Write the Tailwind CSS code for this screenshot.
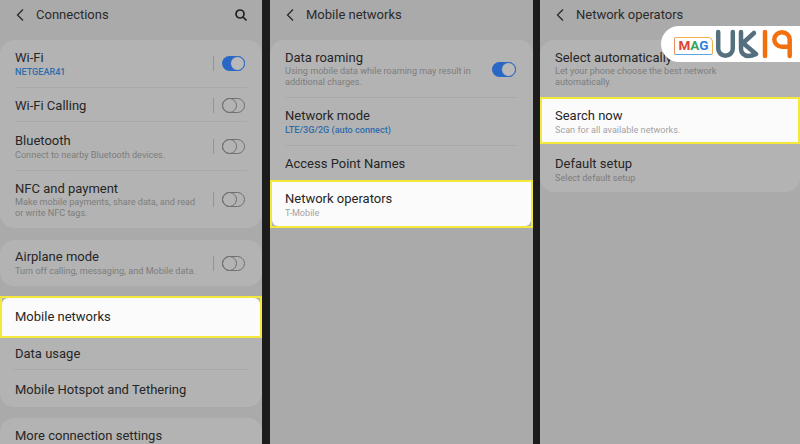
<!DOCTYPE html>
<html><head><meta charset="utf-8"><script src="https://cdn.jsdelivr.net/npm/@tailwindcss/browser@4"></script></head>
<body class="m-0">
<div class="relative w-[800px] h-[444px] overflow-hidden bg-[#1c1c1c] flex font-['Roboto',sans-serif] text-[#262626] text-[13px] leading-[16px]">

<!-- Panel 1 -->
<div class="w-[262px] h-full bg-[#aaaaaa] shrink-0 overflow-hidden">
  <div class="h-[40px] pl-[15px] pr-[14px] pb-[11px] flex items-center">
    <svg class="w-[10px] h-[14px] mr-[11px]" viewBox="0 0 10 14" fill="none" stroke="#2a2a2a" stroke-width="1.3"><path d="M8 1.500 2.500 7 8 12.500"/></svg>
    <span class="text-[#2a2a2a]">Connections</span>
    <svg class="ml-auto w-[14px] h-[14px]" viewBox="0 0 14 14" fill="none" stroke="#222" stroke-width="1.7"><circle cx="6" cy="6" r="4"/><path d="m9 9 3.500 3.500"/></svg>
  </div>
  <div class="bg-[#b3b3b3] rounded-[14px] h-[188px] flex flex-col px-[15px]">
    <div class="h-[48px] flex items-center border-b border-[#a9a9a9]">
      <div class="flex-1"><div>Wi-Fi</div><div class="text-[9.1px] leading-[12px] text-[#2f6cab] font-medium">NETGEAR41</div></div>
      <div class="w-px h-[15px] bg-[#949494] mr-[8px]"></div>
      <div class="relative w-[23px] h-[15px] mr-[2px] rounded-full bg-[#2a66c4]"><div class="absolute right-0 top-0 w-[15px] h-[15px] rounded-full bg-[#b9b9b9] border border-[#2a66c4]"></div></div>
    </div>
    <div class="h-[34px] pt-[2px] flex items-center border-b border-[#a9a9a9]">
      <div class="flex-1">Wi-Fi Calling</div>
      <div class="w-px h-[15px] bg-[#949494] mr-[8px]"></div>
      <div class="relative w-[23px] h-[15px] mr-[2px] rounded-full border border-[#707070]"><div class="absolute left-[-1px] top-[-1px] w-[15px] h-[15px] rounded-full border border-[#707070]"></div></div>
    </div>
    <div class="h-[49px] flex items-center border-b border-[#a9a9a9]">
      <div class="flex-1 pt-[2px]"><div>Bluetooth</div><div class="text-[9.1px] leading-[12px] text-[#7d7d7d]">Connect to nearby Bluetooth devices.</div></div>
      <div class="w-px h-[15px] bg-[#949494] mr-[8px]"></div>
      <div class="relative w-[23px] h-[15px] mr-[2px] rounded-full border border-[#707070]"><div class="absolute left-[-1px] top-[-1px] w-[15px] h-[15px] rounded-full border border-[#707070]"></div></div>
    </div>
    <div class="h-[57px] flex items-center">
      <div class="flex-1 pt-[1px]"><div>NFC and payment</div><div class="text-[9.1px] leading-[11px] text-[#7d7d7d]">Make mobile payments, share data, and read<br>or write NFC tags.</div></div>
      <div class="w-px h-[15px] bg-[#949494] mr-[8px]"></div>
      <div class="relative w-[23px] h-[15px] mr-[2px] rounded-full border border-[#707070]"><div class="absolute left-[-1px] top-[-1px] w-[15px] h-[15px] rounded-full border border-[#707070]"></div></div>
    </div>
  </div>
  <div class="bg-[#b3b3b3] rounded-[14px] h-[46px] mt-[12px] flex items-center px-[15px]">
    <div class="flex-1"><div>Airplane mode</div><div class="text-[9.1px] leading-[12px] text-[#7d7d7d]">Turn off calling, messaging, and Mobile data.</div></div>
    <div class="w-px h-[15px] bg-[#949494] mr-[8px]"></div>
    <div class="relative w-[23px] h-[15px] mr-[2px] rounded-full border border-[#707070]"><div class="absolute left-[-1px] top-[-1px] w-[15px] h-[15px] rounded-full border border-[#707070]"></div></div>
  </div>
  <div class="mt-[10px] bg-[#b3b3b3] rounded-[14px] h-[111px]">
    <div class="h-[42px] bg-[#b3b3b3] border-2 border-[#f4e83c]"><div class="h-full bg-[#fcfbfc] rounded-t-[6px] pl-[13px] flex items-center">Mobile networks</div></div>
    <div class="mx-[13px] pl-[2px] h-[32px] flex items-center border-b border-[#a9a9a9]">Data usage</div>
    <div class="px-[15px] h-[37px] pt-[2px] flex items-center">Mobile Hotspot and Tethering</div>
  </div>
  <div class="mt-[11px] bg-[#b3b3b3] rounded-t-[14px] h-[40px] px-[15px] pt-[10px]">More connection settings</div>
</div>

<div class="w-[8px] shrink-0"></div>

<!-- Panel 2 -->
<div class="w-[263px] h-full bg-[#aaaaaa] shrink-0 overflow-hidden">
  <div class="h-[40px] pl-[15px] pb-[11px] flex items-center">
    <svg class="w-[10px] h-[14px] mr-[11px]" viewBox="0 0 10 14" fill="none" stroke="#2a2a2a" stroke-width="1.3"><path d="M8 1.500 2.500 7 8 12.500"/></svg>
    <span class="text-[#2a2a2a]">Mobile networks</span>
  </div>
  <div class="bg-[#b3b3b3] rounded-[14px] h-[188px]">
    <div class="mx-[15px] h-[58px] pt-[1px] flex items-center border-b border-[#a9a9a9]">
      <div class="flex-1"><div>Data roaming</div><div class="text-[9.1px] leading-[11px] text-[#7d7d7d]">Using mobile data while roaming may result in<br>additional charges.</div></div>
      <div class="relative w-[24px] h-[15px] mr-[2px] rounded-full bg-[#2a66c4]"><div class="absolute right-0 top-0 w-[15px] h-[15px] rounded-full bg-[#b9b9b9] border border-[#2a66c4]"></div></div>
    </div>
    <div class="mx-[15px] h-[48px] pt-[1px] flex flex-col justify-center border-b border-[#a9a9a9]">
      <div>Network mode</div><div class="text-[9.1px] leading-[12px] text-[#2f6cab] font-medium">LTE/3G/2G (auto connect)</div>
    </div>
    <div class="px-[15px] h-[34px] pt-[2px] flex items-center">Access Point Names</div>
    <div class="h-[48px] bg-[#b3b3b3] border-2 border-[#f4e83c]"><div class="h-full pt-[1px] bg-[#fcfbfc] rounded-b-[6px] pl-[13px] flex flex-col justify-center">
      <div>Network operators</div><div class="text-[9.1px] leading-[12px] text-[#a3a3a3]">T-Mobile</div>
    </div></div>
  </div>
</div>

<div class="w-[7px] shrink-0"></div>

<!-- Panel 3 -->
<div class="flex-1 h-full bg-[#aaaaaa] overflow-hidden">
  <div class="h-[40px] pl-[15px] pb-[11px] flex items-center">
    <svg class="w-[10px] h-[14px] mr-[11px]" viewBox="0 0 10 14" fill="none" stroke="#2a2a2a" stroke-width="1.3"><path d="M8 1.500 2.500 7 8 12.500"/></svg>
    <span class="text-[#2a2a2a]">Network operators</span>
  </div>
  <div class="bg-[#b3b3b3] rounded-[14px] h-[152px]">
    <div class="px-[15px] h-[57px] pt-[1px] flex flex-col justify-center">
      <div>Select automatically</div><div class="text-[9.1px] leading-[11px] text-[#7d7d7d]">Let your phone choose the best network<br>automatically.</div>
    </div>
    <div class="h-[47px] bg-[#fcfbfc] border-2 border-[#f4e83c] pt-[3px] pl-[13px] flex flex-col justify-center">
      <div>Search now</div><div class="text-[9.1px] leading-[12px] text-[#a3a3a3]">Scan for all available networks.</div>
    </div>
    <div class="px-[15px] h-[48px] pt-[3px] flex flex-col justify-center">
      <div>Default setup</div><div class="text-[9.1px] leading-[12px] text-[#7d7d7d]">Select default setup</div>
    </div>
  </div>
</div>

<!-- Logo badge -->
<div class="absolute right-0 top-[26px] w-[139px] h-[36px] bg-white rounded-l-[18px] flex items-center pl-[13px]">
  <div class="w-[39px] h-[18px] shrink-0 rounded-tr-[5px] rounded-[2px] border border-[#f2b04a] border-b-[#5aa7e0] border-l-[#e89060] mt-[4px] flex items-center justify-center text-[13.5px] font-bold leading-none">
    <span class="text-[#e04338]">M</span><span class="text-[#3aa655]">A</span><span class="text-[#2f7fe0]">G</span>
  </div>
  <svg class="shrink-0 w-[87px] h-[36px]" viewBox="0 0 87 36" fill="none" stroke-linecap="round" stroke-linejoin="round">
    <path d="M5.200 6v16.500a7.300 7.300 0 0 0 14.600 0V6" stroke="#54707f" stroke-width="4.500"/>
    <path d="M28 6v17a7 7 0 0 0 7 7c4 0 6-1 8-2M41 7 30 17l13 11" stroke="#54707f" stroke-width="4.500"/>
    <path d="M52 6v24" stroke="#f2700f" stroke-width="4.500"/>
    <path d="M76.700 13.500a7.700 7.300 0 1 0-7.700 7.300h7.700M76.700 13.500V30" stroke="#f2700f" stroke-width="4.500"/>
  </svg>
</div>
</div>
</body></html>
